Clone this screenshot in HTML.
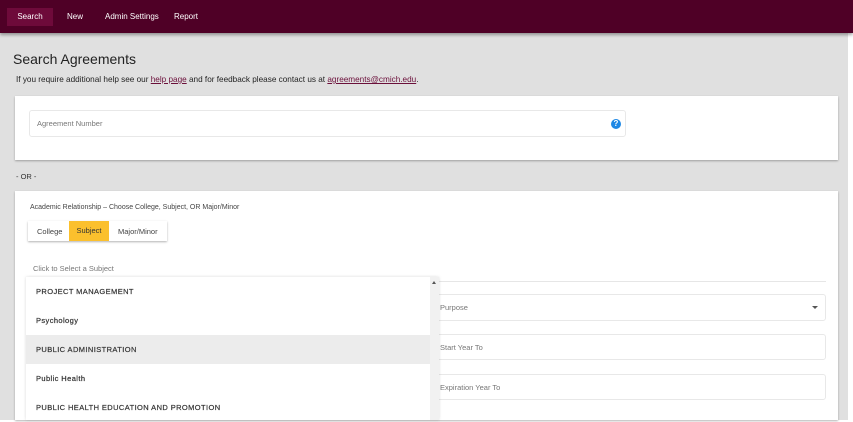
<!DOCTYPE html>
<html><head><style>
*{box-sizing:border-box;margin:0;padding:0}
body{width:853px;height:420px;overflow:hidden;background:#fff;font-family:"Liberation Sans",sans-serif;position:relative}
.bg{position:absolute;left:0;top:0;width:848px;height:420px;background:#e0e0e0}
.nav{position:absolute;left:0;top:0;width:853px;height:33px;background:#4f0026;box-shadow:0 2px 3px rgba(0,0,0,.35)}
.nav span{position:absolute;top:0;height:33px;line-height:33px;color:#fff;font-size:8px}
.sel{background:#6e0a3a;padding:0 0;top:8px!important;height:18px!important;line-height:18px!important;width:46px;text-align:center}
.a{position:absolute}
h1{position:absolute;left:13px;top:51px;font-size:14px;font-weight:normal;color:#222}
.help{left:16px;top:75px;font-size:8.2px;color:#222}
.help u{color:#6b0f3a}
.card{position:absolute;background:#fff;box-shadow:0 1px 2px rgba(0,0,0,.3)}
.inp{position:absolute;border:1px solid #e8e8e8;border-radius:3px;background:#fff;font-size:7.5px;color:#777;padding-left:7px;display:flex;align-items:center}
.item{position:absolute;left:26px;width:404px;height:29px;line-height:29px;padding-left:10px;font-size:7.5px;color:#333;letter-spacing:.4px;-webkit-text-stroke:.2px #333}
</style></head><body>
<div class="bg"></div>
<div class="nav">
<span class="sel" style="left:7px">Search</span>
<span style="left:67px">New</span>
<span style="left:105px">Admin Settings</span>
<span style="left:174px">Report</span>
</div>
<h1>Search Agreements</h1>
<div class="a help">If you require additional help see our <u>help page</u> and for feedback please contact us at <u>agreements@cmich.edu</u>.</div>
<div class="card" style="left:15px;top:96px;width:823px;height:64px"></div>
<div class="inp" style="left:29px;top:110px;width:597px;height:27px">Agreement Number</div>
<div class="a" style="left:611px;top:119px;width:10px;height:10px;border-radius:50%;background:#1e88e5;color:#fff;font-size:8px;font-weight:bold;text-align:center;line-height:10px">?</div>
<div class="a" style="left:16px;top:172px;font-size:7.5px;color:#333">- OR -</div>
<div class="card" style="left:15px;top:191px;width:823px;height:229px"></div>
<div class="a" style="left:30px;top:204px;font-size:7px;color:#444">Academic Relationship – Choose College, Subject, OR Major/Minor</div>
<div class="a" style="left:28px;top:221px;width:139px;height:20px;background:#fff;box-shadow:0 1px 2px rgba(0,0,0,.3);font-size:7.5px;color:#444">
<span class="a" style="left:9px;top:6px">College</span>
<span class="a" style="left:41px;top:0;width:40px;height:20px;background:#fbc02d;color:#333;text-align:center;line-height:20px">Subject</span>
<span class="a" style="left:90px;top:6px">Major/Minor</span>
</div>
<div class="a" style="left:33px;top:264px;font-size:7.5px;color:#777">Click to Select a Subject</div>
<div class="a" style="left:430px;top:281px;width:396px;height:1px;background:#e6e6e6"></div>
<div class="inp" style="left:432px;top:294px;width:394px;height:27px">Purpose<span class="a" style="right:7px;top:11px;border:3px solid transparent;border-top:3px solid #555"></span></div>
<div class="inp" style="left:432px;top:334px;width:394px;height:26px">Start Year To</div>
<div class="inp" style="left:432px;top:374px;width:394px;height:26px">Expiration Year To</div>
<div class="a" style="left:26px;top:277px;width:413px;height:143px;background:#fff;box-shadow:0 0 3px rgba(0,0,0,.15)"></div>
<div class="a" style="left:430px;top:277px;width:9px;height:143px;background:#f1f1f1"></div>
<div class="a" style="left:432px;top:279px;border:2px solid transparent;border-bottom:3px solid #555"></div>
<div class="item" style="top:277px">PROJECT MANAGEMENT</div>
<div class="item" style="top:306px">Psychology</div>
<div class="item" style="top:335px;background:#ececec">PUBLIC ADMINISTRATION</div>
<div class="item" style="top:364px">Public Health</div>
<div class="item" style="top:393px">PUBLIC HEALTH EDUCATION AND PROMOTION</div>
</body></html>
